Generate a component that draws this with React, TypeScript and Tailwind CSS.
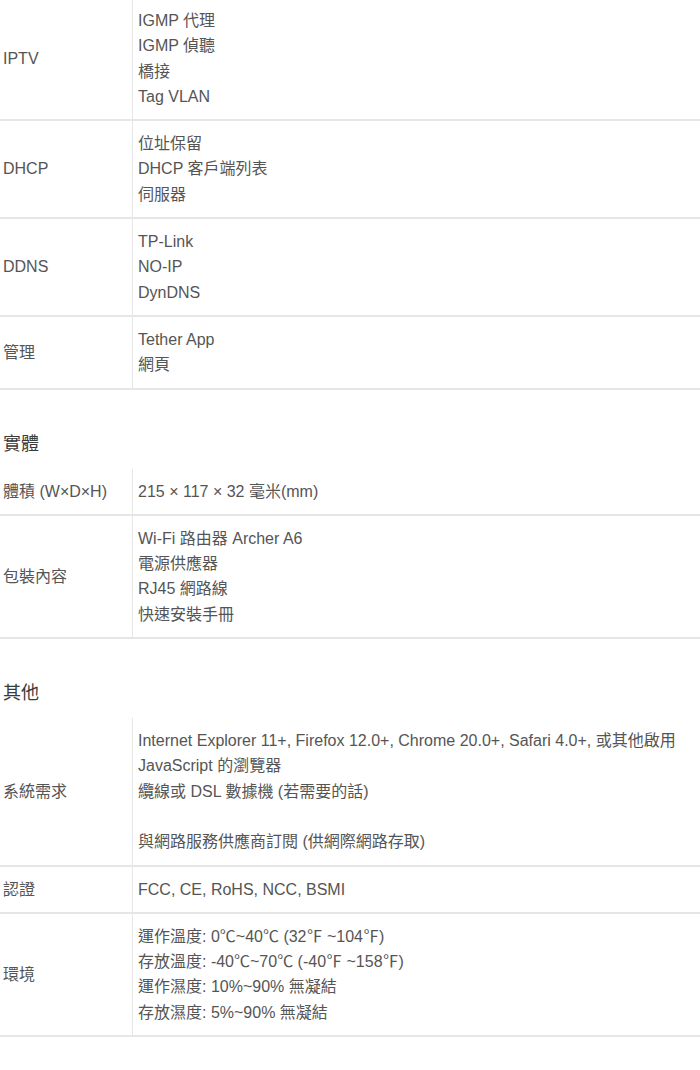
const font = { fontFamily: '"Liberation Sans", Arial, "Noto Sans CJK TC", sans-serif' }

type Row = { label: string; values: string[] }
type Section = { title?: string; rows: Row[] }

// spec sections, same order as the page
const sections: Section[] = [
  {
    rows: [
      { label: "IPTV", values: ["IGMP 代理", "IGMP 偵聽", "橋接", "Tag VLAN"] },
      { label: "DHCP", values: ["位址保留", "DHCP 客戶端列表", "伺服器"] },
      { label: "DDNS", values: ["TP-Link", "NO-IP", "DynDNS"] },
      { label: "管理", values: ["Tether App", "網頁"] },
    ],
  },
  {
    title: "實體",
    rows: [
      { label: "體積 (W×D×H)", values: ["215 × 117 × 32 毫米(mm)"] },
      {
        label: "包裝內容",
        values: ["Wi-Fi 路由器 Archer A6", "電源供應器", "RJ45 網路線", "快速安裝手冊"],
      },
    ],
  },
  {
    title: "其他",
    rows: [
      {
        label: "系統需求",
        values: [
          "Internet Explorer 11+, Firefox 12.0+, Chrome 20.0+, Safari 4.0+, 或其他啟用 JavaScript 的瀏覽器",
          "纜線或 DSL 數據機 (若需要的話)",
          "",
          "與網路服務供應商訂閱 (供網際網路存取)",
        ],
      },
      { label: "認證", values: ["FCC, CE, RoHS, NCC, BSMI"] },
      {
        label: "環境",
        values: [
          "運作溫度: 0℃~40℃ (32℉ ~104℉)",
          "存放溫度: -40℃~70℃ (-40℉ ~158℉)",
          "運作濕度: 10%~90% 無凝結",
          "存放濕度: 5%~90% 無凝結",
        ],
      },
    ],
  },
]

function SpecRow({ row }: { row: Row }) {
  return (
    <div className="flex border-b-2 border-[#e6e6e6]">
      {/* label column */}
      <div className="w-[133px] shrink-0 flex items-center pl-[3px] border-r border-[#e6e6e6]">
        {row.label}
      </div>
      <div className="flex-1 py-[10px] pl-[5px] pr-2">
        {row.values.map((v, i) => (
          <div key={i} className="min-h-[25.3px]">
            {v}
          </div>
        ))}
      </div>
    </div>
  )
}

export default function App() {
  return (
    <div
      className="w-[700px] min-h-[1070px] bg-white text-[#555] text-[16px] leading-[25.3px] -mt-[2px]"
      style={font}
    >
      {sections.map((s, i) => (
        <div key={i}>
          {s.title && (
            <div className="pt-[40px] pb-[11px] pl-[3px] text-[18px] leading-[28px] text-[#3a3a3a]">
              {s.title}
            </div>
          )}
          {s.rows.map((r) => (
            <SpecRow key={r.label} row={r} />
          ))}
        </div>
      ))}
    </div>
  )
}
